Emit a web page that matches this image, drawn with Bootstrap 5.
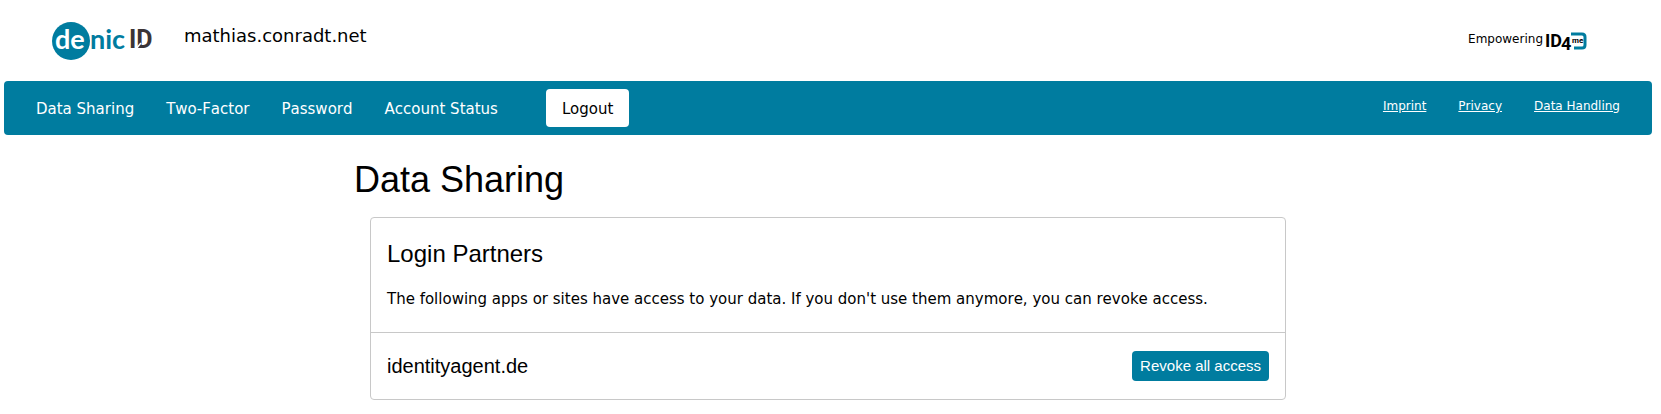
<!DOCTYPE html>
<html lang="en">
<head>
<meta charset="utf-8">
<meta name="viewport" content="width=device-width, initial-scale=1">
<title>Data Sharing</title>
<link href="https://cdn.jsdelivr.net/npm/bootstrap@5.3.0/dist/css/bootstrap.min.css" rel="stylesheet">
<style>
  :root { --brand: #007c9f; --line: #c8c8c8; }
  body { font-family: Verdana, "DejaVu Sans", sans-serif; font-size: 15px; line-height: 22px; color: #000; font-kerning: none; }
  h1, h2, h3, .btn-revoke { font-family: "Liberation Sans", Arial, sans-serif; font-weight: 400; }
  .page { padding: 0 9px 0 4px; }
  .site-head { padding: 22px 65px 20px 48px; }
  .site-head svg { display: block; overflow: visible; }
  .monogram { font-family: Roboto, sans-serif; font-weight: 700; }
  .account { font-size: 18px; line-height: 28px; margin-left: 28px; }
  .powered { font-size: 12px; line-height: 20px; gap: 2px; margin-top: 7px; }
  .main-bar { background: var(--brand); border-radius: 4px; padding: 8px 32px; }
  .main-bar a { color: #fff; }
  .main-links { gap: 32px; }
  .main-links > a { padding-top: 1px; }
  .btn-logout { font-size: 15px; line-height: 22px; padding: 9px 16px 7px; border: 0; border-radius: 4px; background: #fff; color: #000; margin-left: 16px; }
  .legal-links { font-size: 12px; line-height: 20px; gap: 32px; margin-top: 7px; }
  .content { max-width: 948px; }
  h1 { font-size: 36px; line-height: 44px; margin: 23px 0 15px; }
  h2 { font-size: 24px; line-height: 28px; margin: 0 0 20px; }
  h3 { font-size: 20px; line-height: 28px; margin: 0; }
  .panel { margin: 0 16px; border: 1px solid var(--line); border-radius: 4px; }
  .panel-intro { padding: 22px 16px; }
  .panel-item { padding: 18px 16px; border-top: 1px solid var(--line); }
  .btn-revoke { font-size: 15px; line-height: 18px; padding: 6px 8px; border: 0; border-radius: 4px; background: var(--brand); color: #fff; }
</style>
</head>
<body>
<div class="page">
  <header class="site-head d-flex justify-content-between align-items-start">
    <div class="d-flex align-items-start">
      <svg width="104" height="39" viewBox="0 0 104 39" role="img" aria-label="denic ID">
        <circle cx="19" cy="19" r="19" fill="#007c9f"/>
        <g font-family="Lato, sans-serif" font-weight="700" font-size="27">
          <text x="3" y="27" fill="#fff">de</text>
          <text x="38" y="27" fill="#007c9f">nic</text>
        </g>
        <text class="monogram" x="77" y="26" fill="#3b3436" font-size="25">ID</text>
        <path d="M83 28l6-7" stroke="#fff" stroke-width="1.6"/>
      </svg>
      <div class="account">mathias.conradt.net</div>
    </div>
    <div class="powered d-flex">
      <span>Empowering</span>
      <svg width="42" height="26" viewBox="0 0 42 26" role="img" aria-label="ID4me">
        <path d="M26 5h11q3 0 3 3v8q0 3-3 3h-8" fill="none" stroke="#007c9f" stroke-width="3"/>
        <g class="monogram">
          <text x="0" y="18" font-size="18">ID</text>
          <text x="16" y="21" font-size="18">4</text>
          <text x="27" y="14" font-size="8">me</text>
        </g>
      </svg>
    </div>
  </header>

  <nav class="main-bar d-flex justify-content-between align-items-start">
    <div class="main-links d-flex align-items-center">
      <a class="text-decoration-none" href="#">Data Sharing</a>
      <a class="text-decoration-none" href="#">Two-Factor</a>
      <a class="text-decoration-none" href="#">Password</a>
      <a class="text-decoration-none" href="#">Account Status</a>
      <button class="btn-logout" type="button">Logout</button>
    </div>
    <div class="legal-links d-flex">
      <a href="#">Imprint</a>
      <a href="#">Privacy</a>
      <a href="#">Data Handling</a>
    </div>
  </nav>

  <main class="content mx-auto">
    <h1>Data Sharing</h1>
    <section class="panel">
      <div class="panel-intro">
        <h2>Login Partners</h2>
        <p class="mb-0">The following apps or sites have access to your data. If you don't use them anymore, you can revoke access.</p>
      </div>
      <div class="panel-item d-flex justify-content-between align-items-center">
        <h3>identityagent.de</h3>
        <button class="btn-revoke" type="button">Revoke all access</button>
      </div>
    </section>
  </main>
</div>
<script src="https://cdn.jsdelivr.net/npm/bootstrap@5.3.0/dist/js/bootstrap.bundle.min.js"></script>
</body>
</html>
